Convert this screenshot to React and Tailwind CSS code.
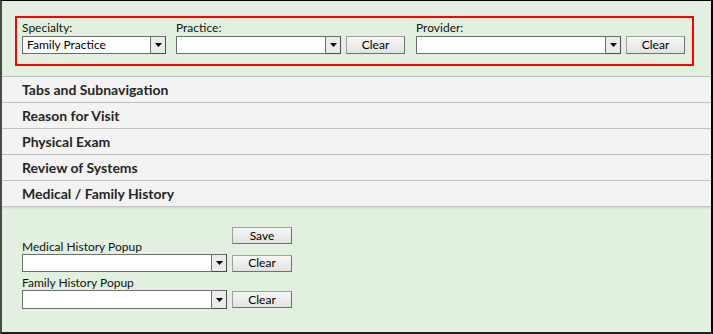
import React from "react";

const font = { fontFamily: "Lato, 'Liberation Sans', sans-serif" };

const DropSelect = ({ width, value = "", height = "h-[18px]" }) => {
  return (
    <div className={`flex ${height}`} style={{ width }}>
      <div className="flex-1 bg-white border border-[#6e6e6e] flex items-center pl-[4px] text-[12px] text-black leading-none overflow-hidden whitespace-nowrap">
        {value}
      </div>
      <div className="w-[15px] bg-[#ebebeb] border-t border-t-[#6e6e6e] border-b border-b-[#4a4a4a] border-r border-r-[#4a4a4a] flex items-center justify-center">
        <svg width="7" height="4" viewBox="0 0 7 4">
          <path d="M0 0 H7 L3.5 4 Z" fill="#000" />
        </svg>
      </div>
    </div>
  );
};

const WinButton = ({ children, w = "w-[59px]", h = "h-[18px]", className = "" }) => {
  return (
    <button
      className={`${w} ${h} ${className} border border-[#a0a0a0] border-r-[#707070] border-b-[#707070] bg-linear-to-b from-[#f7f7f7] to-[#e3e3e3] text-[12px] leading-none text-black flex items-center justify-center`}
    >
      {children}
    </button>
  );
};

const sections = [
  "Tabs and Subnavigation",
  "Reason for Visit",
  "Physical Exam",
  "Review of Systems",
  "Medical / Family History",
];

export default function App() {
  return (
    <div
      className="w-[713px] h-[334px] bg-[#e2f1df] border-t border-t-black border-l-2 border-l-[#4a4a4a] border-r-2 border-r-black border-b-2 border-b-[#222] flex flex-col overflow-hidden"
      style={font}
    >
      {/* filter box */}
      <div className="pt-[15px] pl-[13px] pr-[17px] pb-[10px]">
        <div className="h-[50px] border-2 border-[#ff0000] pl-[5px] pt-[2px] flex gap-[10px]">
          <div className="flex flex-col">
            <span className="text-[12px] leading-[16px] text-[#111]">Specialty:</span>
            <DropSelect width="144px" value="Family Practice" />
          </div>
          <div className="flex flex-col">
            <span className="text-[12px] leading-[16px] text-[#111]">Practice:</span>
            <div className="flex items-center gap-[5px]">
              <DropSelect width="165px" />
              <WinButton>Clear</WinButton>
            </div>
          </div>
          <div className="flex flex-col ml-[1px]">
            <span className="text-[12px] leading-[16px] text-[#111]">Provider:</span>
            <div className="flex items-center gap-[5px]">
              <DropSelect width="205px" />
              <WinButton>Clear</WinButton>
            </div>
          </div>
        </div>
      </div>

      {/* collapsed sections */}
      <div className="border-b border-b-[#c4c4c4] shadow-[0_1px_2px_rgba(0,0,0,0.12)]">
        {sections.map((s) => (
          <div
            key={s}
            className="h-[26px] border-t border-t-[#c0c0c0] bg-[#f3f3f3] flex items-center pl-[20px] text-[14px] font-bold text-[#262626]"
          >
            {s}
          </div>
        ))}
      </div>

      {/* popups */}
      <div className="pt-[20px] pl-[20px]">
        <div className="grid grid-cols-[205px_60px] gap-x-[5px]">
          <span className="h-[27px] flex items-end text-[12px] leading-[14px] text-[#111]">Medical History Popup</span>
          <WinButton w="w-[60px]" h="h-[17px]" className="self-start">Save</WinButton>

          <DropSelect width="205px" />
          <WinButton w="w-[60px]" h="h-[17px]" className="self-center">Clear</WinButton>

          <span className="mt-[4px] text-[12px] leading-[14px] text-[#111]">Family History Popup</span>
          <span />

          <DropSelect width="205px" height="h-[19px]" />
          <WinButton w="w-[60px]" h="h-[17px]" className="self-center">Clear</WinButton>
        </div>
      </div>
    </div>
  );
}
